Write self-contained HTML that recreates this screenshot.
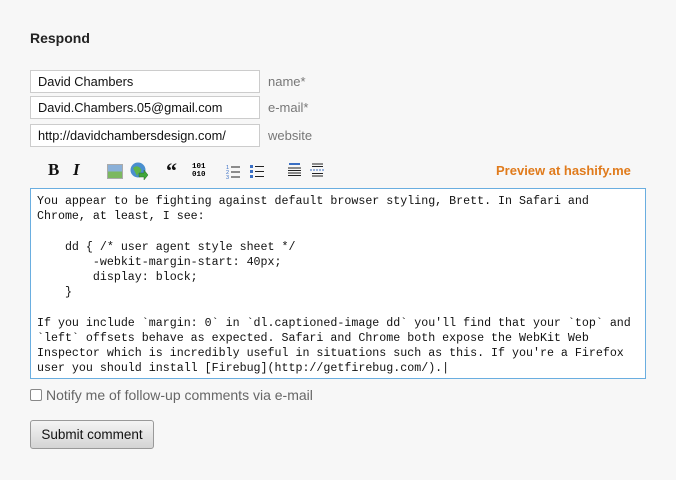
<!DOCTYPE html>
<html><head><meta charset="utf-8"><style>
body{margin:0;width:676px;height:480px;background:#f7f7f7;font-family:"Liberation Sans",sans-serif;position:relative;overflow:hidden}
.a{position:absolute}
h2{position:absolute;left:30px;top:30px;margin:0;font-size:14px;font-weight:bold;color:#222}
.in{position:absolute;left:30px;background:#fff;border:1px solid #ccc;font-size:12.8px;color:#111;line-height:21px;padding-left:7px;box-sizing:border-box;width:230px;height:23px}
.lb{position:absolute;left:268px;font-size:13px;color:#777}
.ta{position:absolute;left:30px;top:188px;width:616px;height:191px;box-sizing:border-box;border:1px solid #6aaee0;background:#fff;padding:5px 6px;font-family:"Liberation Mono",monospace;font-size:11.65px;line-height:15.2px;color:#111;white-space:pre}
.t{position:absolute;top:162px;font-size:13px;color:#111}
</style></head><body>
<h2>Respond</h2>
<div class="in" style="top:70px">David Chambers</div><div class="lb" style="top:74px">name*</div>
<div class="in" style="top:96px">David.Chambers.05@gmail.com</div><div class="lb" style="top:100px">e-mail*</div>
<div class="in" style="top:124px">http://davidchambersdesign.com/</div><div class="lb" style="top:128px">website</div>
<div class="t" style="left:48px;font-family:'Liberation Serif',serif;font-weight:bold;font-size:17px;top:160px">B</div>
<div class="t" style="left:73px;font-family:'Liberation Serif',serif;font-style:italic;font-weight:bold;font-size:17px;top:160px">I</div>
<div class="a" style="left:107px;top:164px;width:14px;height:13px;border:1px solid #aaa;background:linear-gradient(#8ab0d8 50%,#7cb860 50%)"></div>
<svg class="a" style="left:130px;top:162px" width="19" height="19"><circle cx="8" cy="8" r="7.5" fill="#4a8fcf"/><path d="M3 6q3-3 6-1t2 5q-3 1-4 4" fill="#5fb548"/><path d="M9 11h5v-3l4 5-4 5v-3H9z" fill="#3fa83a" stroke="#2c6b22" stroke-width=".5"/></svg>
<div class="t" style="left:166px;font-family:'Liberation Serif',serif;font-weight:bold;font-size:22px;top:158px">“</div>
<div class="a" style="left:192px;top:164px;font-family:'Liberation Mono',monospace;font-size:7.5px;line-height:7.5px;font-weight:bold">101<br>010</div>
<svg class="a" style="left:226px;top:164px" width="15" height="15"><g fill="#3a6fc4" font-size="5.5" font-family="Liberation Sans"><text x="0" y="5">1</text><text x="0" y="10">2</text><text x="0" y="15">3</text></g><path d="M5 3h9M5 8h9M5 13h9" stroke="#222"/></svg>
<svg class="a" style="left:250px;top:164px" width="15" height="15"><path d="M0 1h3v3H0zM0 6h3v3H0zM0 11h3v3H0z" fill="#3a6fc4"/><path d="M5 2.5h9M5 7.5h9M5 12.5h9" stroke="#222"/></svg>
<svg class="a" style="left:288px;top:163px" width="14" height="15"><path d="M1 1h11" stroke="#3a6fc4" stroke-width="2"/><path d="M0 5h13M0 7.5h13M0 10h13M0 12.5h13" stroke="#222"/></svg>
<svg class="a" style="left:310px;top:163px" width="16" height="15"><path d="M2 1h11M2 3.5h11M2 10.5h11M2 13h11" stroke="#222"/><path d="M0 7h15" stroke="#3a6fc4" stroke-dasharray="2 1"/></svg>
<div class="a" style="left:496px;top:163px;font-size:13px;font-weight:bold;color:#e07b1c">Preview at hashify.me</div>
<div class="ta">You appear to be fighting against default browser styling, Brett. In Safari and
Chrome, at least, I see:

    dd { /* user agent style sheet */
        -webkit-margin-start: 40px;
        display: block;
    }

If you include `margin: 0` in `dl.captioned-image dd` you'll find that your `top` and
`left` offsets behave as expected. Safari and Chrome both expose the WebKit Web
Inspector which is incredibly useful in situations such as this. If you're a Firefox
user you should install [Firebug](http://getfirebug.com/).|</div>
<div class="a" style="left:30px;top:389px;width:10px;height:10px;border:1px solid #888;border-radius:2px;background:#fff"></div>
<div class="a" style="left:46px;top:387px;font-size:14px;color:#666">Notify me of follow-up comments via e-mail</div>
<div class="a" style="left:30px;top:420px;width:124px;height:29px;box-sizing:border-box;border:1px solid #999;border-radius:3px;background:linear-gradient(#f4f4f4,#d4d4d4);font-size:13.5px;color:#111;text-align:center;line-height:27px">Submit comment</div>
</body></html>
